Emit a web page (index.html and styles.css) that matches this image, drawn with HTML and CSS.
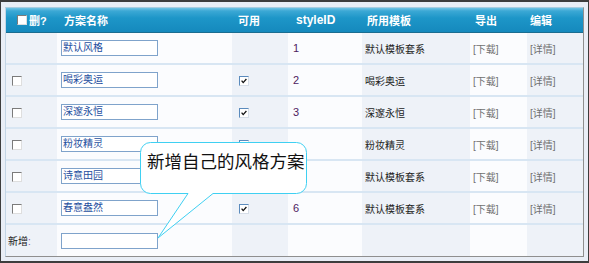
FILE: index.html
```html
<!DOCTYPE html>
<html lang="zh-CN">
<head>
    <meta charset="UTF-8">
    <title>风格方案</title>
    <link rel="stylesheet" href="styles.css">
</head>
<body>
    <div class="frame">
        <table class="styles">
            <colgroup>
                <col class="w-del">
                <col class="w-name">
                <col class="w-use">
                <col class="w-id">
                <col class="w-tpl">
                <col class="w-exp">
                <col class="w-edit">
            </colgroup>
            <thead>
                <tr>
                    <th class="h-del"><span class="box"></span><span class="del-label">删?</span></th>
                    <th class="h-name">方案名称</th>
                    <th class="h-use">可用</th>
                    <th class="h-id">styleID</th>
                    <th class="h-tpl">所用模板</th>
                    <th class="h-exp">导出</th>
                    <th class="h-edit">编辑</th>
                </tr>
            </thead>
            <tbody>
                <tr>
                    <td></td>
                    <td class="name"><span class="field">默认风格</span></td>
                    <td class="use"></td>
                    <td class="sid">1</td>
                    <td class="tpl">默认模板套系</td>
                    <td class="act"><a href="#">[下载]</a></td>
                    <td class="act"><a href="#">[详情]</a></td>
                </tr>
                <tr>
                    <td class="del"><span class="box"></span></td>
                    <td class="name"><span class="field">喝彩奥运</span></td>
                    <td class="use"><span class="box checked"><svg viewBox="0 0 10 10"><polyline points="2,4.5 4,7 8,2.5"/></svg></span></td>
                    <td class="sid">2</td>
                    <td class="tpl">喝彩奥运</td>
                    <td class="act"><a href="#">[下载]</a></td>
                    <td class="act"><a href="#">[详情]</a></td>
                </tr>
                <tr>
                    <td class="del"><span class="box"></span></td>
                    <td class="name"><span class="field">深邃永恒</span></td>
                    <td class="use"><span class="box checked"><svg viewBox="0 0 10 10"><polyline points="2,4.5 4,7 8,2.5"/></svg></span></td>
                    <td class="sid">3</td>
                    <td class="tpl">深邃永恒</td>
                    <td class="act"><a href="#">[下载]</a></td>
                    <td class="act"><a href="#">[详情]</a></td>
                </tr>
                <tr>
                    <td class="del"><span class="box"></span></td>
                    <td class="name"><span class="field">粉妆精灵</span></td>
                    <td class="use"><span class="box checked"><svg viewBox="0 0 10 10"><polyline points="2,4.5 4,7 8,2.5"/></svg></span></td>
                    <td class="sid"></td>
                    <td class="tpl">粉妆精灵</td>
                    <td class="act"><a href="#">[下载]</a></td>
                    <td class="act"><a href="#">[详情]</a></td>
                </tr>
                <tr>
                    <td class="del"><span class="box"></span></td>
                    <td class="name"><span class="field">诗意田园</span></td>
                    <td class="use"><span class="box checked"><svg viewBox="0 0 10 10"><polyline points="2,4.5 4,7 8,2.5"/></svg></span></td>
                    <td class="sid"></td>
                    <td class="tpl">默认模板套系</td>
                    <td class="act"><a href="#">[下载]</a></td>
                    <td class="act"><a href="#">[详情]</a></td>
                </tr>
                <tr>
                    <td class="del"><span class="box"></span></td>
                    <td class="name"><span class="field">春意盎然</span></td>
                    <td class="use"><span class="box checked"><svg viewBox="0 0 10 10"><polyline points="2,4.5 4,7 8,2.5"/></svg></span></td>
                    <td class="sid">6</td>
                    <td class="tpl">默认模板套系</td>
                    <td class="act"><a href="#">[下载]</a></td>
                    <td class="act"><a href="#">[详情]</a></td>
                </tr>
                <tr class="add">
                    <td class="add-label">新增<span class="colon">:</span></td>
                    <td class="name"><span class="field"></span></td>
                    <td></td>
                    <td></td>
                    <td></td>
                    <td></td>
                    <td></td>
                </tr>
            </tbody>
        </table>

        <div class="callout">
            <svg class="bubble" width="168" height="98" viewBox="0 0 168 98">
                <path d="M10.5,0.5 H156.5 A10,10 0 0 1 166.5,10.5 V41.5 A10,10 0 0 1 156.5,51.5 H73 L18,96 L48,51.5 H10.5 A10,10 0 0 1 0.5,41.5 V10.5 A10,10 0 0 1 10.5,0.5 Z"/>
            </svg>
            <span class="callout-text">新增自己的风格方案</span>
        </div>
    </div>
</body>
</html>
```

FILE: styles.css
```css
body {
    margin: 0;
    padding: 0;
    font-family: "Liberation Sans", "Noto Sans CJK SC", sans-serif;
    font-size: 10px;
    color: #222;
}
.frame {
    position: relative;
    width: 589px;
    height: 263px;
    box-sizing: border-box;
    border: 1px solid #3d3d3d;
    border-top-width: 2px;
    border-bottom-width: 2px;
    background: #e9eef6;
    padding: 5px 4px 0 4px;
}
.styles {
    width: 579px;
    table-layout: fixed;
    border-collapse: separate;
    border-spacing: 0;
    border: 1px solid;
    border-color: #a9cde0 #8f8f8f #8f8f8f #c3d5e5;
}
.w-del { width: 51px; }
.w-name { width: 175px; }
.w-use { width: 56px; }
.w-id { width: 74px; }
.w-tpl { width: 108px; }
.w-exp { width: 57px; }
.w-edit { width: 56px; }

/* header */
.styles thead tr {
    height: 25px;
}
.styles th {
    padding: 0;
    text-align: left;
    vertical-align: middle;
    color: #fff;
    font-size: 11px;
    font-weight: bold;
    font-family: "Liberation Sans", "Noto Sans CJK SC", sans-serif;
    background: linear-gradient(#73c4e4 0, #3ba8d5 3px, #1d96c8 10px, #1589bd 100%);
    border-bottom: 1px solid #1b6d90;
}
.h-del { padding-left: 11px !important; }
.h-name { padding-left: 7px !important; }
.h-use { padding-left: 6px !important; }
.h-id { padding-left: 8px !important; font-size: 12px !important; }
.h-tpl { padding-left: 5px !important; }
.h-exp { padding-left: 5px !important; }
.h-edit { padding-left: 3px !important; }
.del-label {
    margin-left: 2px;
    vertical-align: middle;
}

/* body rows */
.styles tbody tr {
    height: 32px;
}
.styles tbody tr.add {
    height: 31px;
}
.styles td {
    padding: 0 0 0 3px;
    vertical-align: middle;
    white-space: nowrap;
    border-bottom: 2px solid #d8e6f3;
}
.styles tr.add td {
    border-bottom: none;
}
.styles td:nth-child(odd) {
    background: #eef2f8;
}
.styles td:nth-child(even) {
    background: #fbfcfe;
}
.styles td.del { padding-left: 6px; }
.styles td.name { padding-left: 4px; }
.styles td.use { padding-left: 7px; }
.styles td.sid {
    padding-left: 5px;
    font-size: 11px;
    color: #4e2160;
}
.styles td.add-label { padding-left: 2px; }
.colon { color: #8a5ab0; }

.box {
    display: inline-block;
    width: 10px;
    height: 10px;
    box-sizing: border-box;
    background: #fff;
    border: 1px solid;
    border-color: #7b7b7b #dedede #dedede #7b7b7b;
    vertical-align: middle;
    position: relative;
}
.box.checked {
    border-color: #5b8bbd #d6dee8 #d6dee8 #5b8bbd;
}
.box svg {
    display: block;
    width: 8px;
    height: 8px;
}
.box polyline {
    fill: none;
    stroke: #111;
    stroke-width: 1.6;
}

.field {
    display: inline-block;
    width: 97px;
    height: 16px;
    box-sizing: border-box;
    border: 1px solid #7fa3cb;
    background: #fff;
    color: #1e4e9e;
    line-height: 14px;
    padding-left: 1px;
    vertical-align: middle;
}
.act a {
    color: #707070;
    text-decoration: none;
}

/* callout over the table */
.callout {
    position: absolute;
    left: 139px;
    top: 140px;
    width: 168px;
    height: 98px;
}
.bubble {
    position: absolute;
    left: 0;
    top: 0;
}
.bubble path {
    fill: #fff;
    stroke: #3fd0f2;
    stroke-width: 1;
}
.callout-text {
    position: absolute;
    left: 7px;
    top: 7px;
    font-family: "Noto Sans CJK SC", sans-serif;
    font-size: 17.5px;
    line-height: 24px;
    color: #111;
    white-space: nowrap;
}
```
